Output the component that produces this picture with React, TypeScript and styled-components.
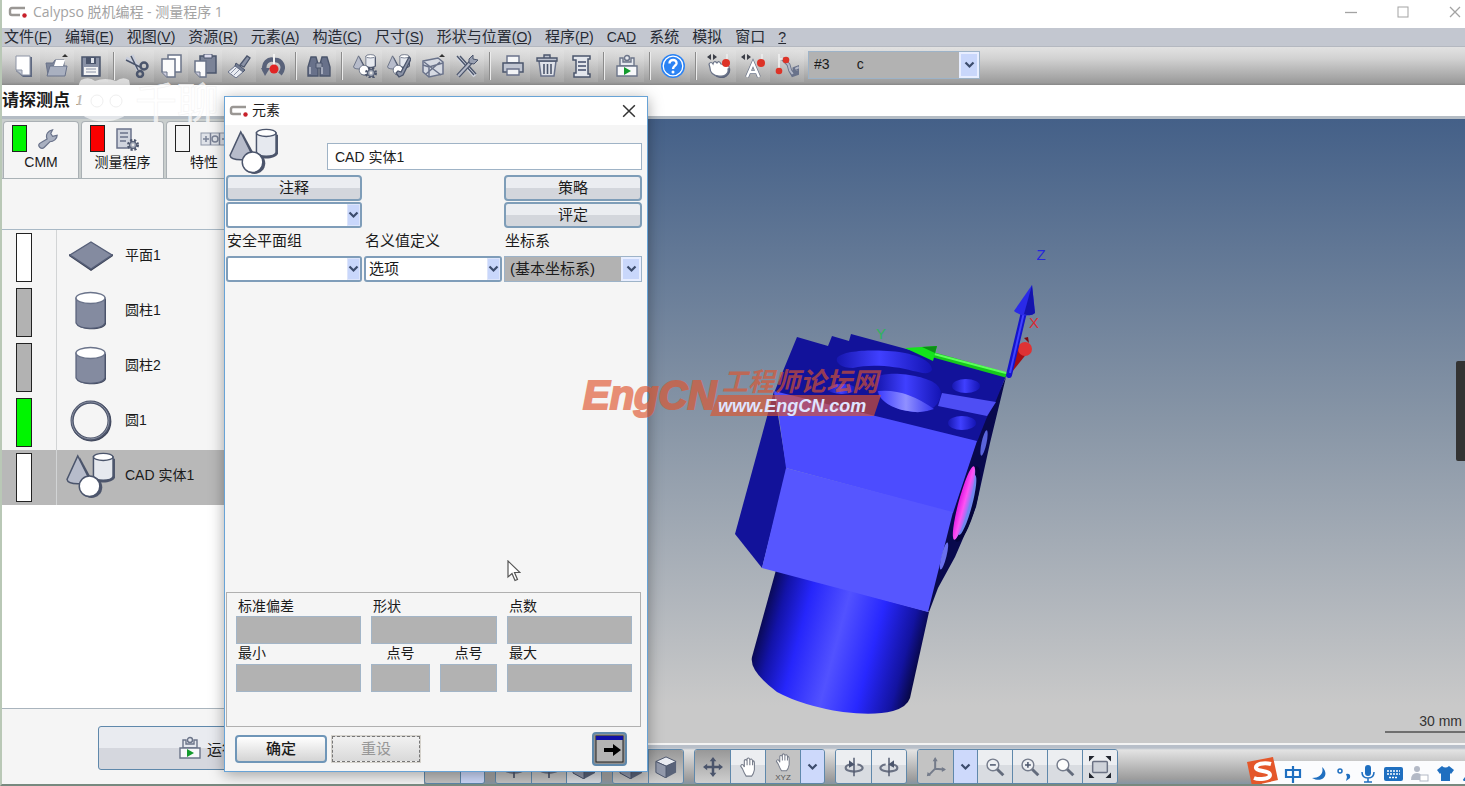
import React, { useId } from "react";
import styled, { createGlobalStyle, css } from "styled-components";

const GlobalStyle = createGlobalStyle`
  *, *::before, *::after { box-sizing: border-box; }
  html, body { margin: 0; height: 100%; overflow: hidden; }
  #root { height: 100%; }
  body, button, input, select {
    font-family: "Liberation Sans", "Noto Sans CJK SC", sans-serif;
    font-size: 15px;
    color: #1b1b1b;
  }
  button, input, select { margin: 0; padding: 0; border-radius: 0; }
  svg { display: block; flex: none; }
`;

/* ---------- palette ---------- */
const line = "#4b556c";
const steel = "#848ba0";
const pale = "#e6e9ef";
const frame = "#5f88ab";

/* ---------- window shell ---------- */
const Window = styled.div`
  position: relative;
  display: flex;
  flex-direction: column;
  height: 100vh;
  min-height: 640px;
  background: #fff;
  border-left: 2px solid #b9c8b6;
  border-bottom: 2px solid #77897f;
  overflow: hidden;
`;

const TitleBar = styled.header`
  display: flex;
  align-items: center;
  height: 28px;
  padding: 0 2px 4px 6px;
  gap: 5px;
  color: #a3a3a3;
  font-family: "Open Sans", "Noto Sans CJK SC", sans-serif;
  font-size: 14px;
  line-height: 20px;
`;

const TitleText = styled.h1`
  flex: 1;
  margin: 0;
  font-size: inherit;
  font-weight: 400;
`;

const WindowControls = styled.div`
  display: flex;
  gap: 36px;
`;

const PlainButton = styled.button`
  display: grid;
  place-items: center;
  width: 16px;
  height: 20px;
  border: 0;
  background: none;
  color: inherit;
`;

const MenuBar = styled.nav`
  display: flex;
  gap: 13px;
  height: 19px;
  padding-left: 2px;
  background: #c3c7d0;
  border-bottom: 1px solid #b4b8c0;
`;

const MenuItem = styled.button`
  border: 0;
  background: none;
  line-height: 16px;
  white-space: nowrap;
  color: #262a33;
`;

const Hotkey = styled.span`
  font-size: 14px;
`;

const ToolBar = styled.div`
  display: flex;
  align-items: center;
  height: 38px;
  padding-left: 4px;
  background: linear-gradient(#e2e2e2, #d2d2d2 30%, #9b9b9b 94%, #878787);
`;

const ToolButton = styled.button`
  display: grid;
  place-items: center;
  width: 34px;
  height: 32px;
  border: 0;
  background: linear-gradient(90deg, transparent, rgba(255, 255, 255, 0.1));
`;

const Separator = styled.span`
  width: 2px;
  height: 28px;
  margin: 0 5px;
  background: #8b8b8b;
  border-right: 1px solid #ececec;
`;

const MessageBar = styled.div`
  display: flex;
  align-items: center;
  gap: 6px;
  height: 31px;
  font-size: 17px;
  line-height: 24px;
`;

const MessageIndex = styled.em`
  font-family: "Liberation Serif", serif;
  font-size: 14px;
  font-weight: 700;
  color: #5a4a38;
`;

const Work = styled.main`
  flex: 1;
  display: flex;
  min-height: 0;
  border-top: 3px solid #b4bcc4;
`;

/* ---------- left panel ---------- */
const SidePanel = styled.aside`
  display: flex;
  flex-direction: column;
  flex: none;
  width: 422px;
  background: #f5f5f5;
`;

const Tabs = styled.div`
  display: flex;
  gap: 2px;
  height: 60px;
  padding: 2px 1px 0;
  background: #c9cecd;
  border-bottom: 1px solid #aab2b6;
`;

const Tab = styled.button<{ $width: number }>`
  display: flex;
  flex-direction: column;
  align-items: stretch;
  width: ${(p) => p.$width}px;
  padding: 3px 8px 0;
  border: 1px solid #aab0b4;
  border-bottom: 0;
  border-radius: 4px 4px 0 0;
  background: #f5f5f5;
  font-size: 14px;
  line-height: 20px;
  text-align: center;
  white-space: nowrap;
`;

const TabTop = styled.span`
  display: flex;
  align-items: center;
  gap: 10px;
  height: 27px;
`;

const Lamp = styled.span<{ $color: string; $tall?: boolean }>`
  flex: none;
  width: ${(p) => (p.$tall ? 16 : 15)}px;
  height: ${(p) => (p.$tall ? 49 : 27)}px;
  border: 1px solid #222;
  background: ${(p) => p.$color};
`;

const PanelHeader = styled.div`
  height: 51px;
  border-bottom: 1px solid #a9b9c6;
`;

const FeatureList = styled.ul`
  flex: 1;
  display: grid;
  grid-auto-rows: 55px;
  align-content: start;
  margin: 0;
  padding: 0;
  list-style: none;
  background: #fff;
`;

const FeatureRow = styled.button<{ $selected?: boolean }>`
  display: grid;
  grid-template-columns: 55px 68px 1fr;
  width: 100%;
  height: 100%;
  border: 0;
  background: ${(p) => (p.$selected ? "#b8b8b8" : "#f5f5f5")};
  font-size: 14px;
  line-height: 51px;
  text-align: left;
`;

const LampCell = styled.span`
  padding: 3px 0 0 14px;
  border-right: 1px solid #d2d4d5;

  > span {
    display: block;
  }
`;

const IconCell = styled.span`
  display: grid;
  place-items: center;
  height: 51px;
`;

const PanelFooter = styled.div`
  display: flex;
  justify-content: center;
  height: 76px;
  padding-top: 17px;
  border-top: 1px solid #a9b4bd;
`;

const RunButton = styled.button`
  display: flex;
  align-items: center;
  gap: 5px;
  width: 230px;
  height: 44px;
  padding-left: 79px;
  border: 1px solid ${frame};
  border-radius: 3px;
  background: linear-gradient(#e9ebf0 50%, #d5d7de 50%);
`;

/* ---------- 3D view ---------- */
const ViewColumn = styled.section`
  flex: 1;
  display: flex;
  flex-direction: column;
  min-width: 0;
`;

const Viewport = styled.div`
  position: relative;
  flex: 1;
  min-height: 0;
  background: linear-gradient(#446088, #8795a6 48%, #c9c9c9 94%);

  > svg {
    width: 100%;
    height: 100%;
  }
`;

const ScaleMark = styled.span`
  position: absolute;
  right: 0;
  bottom: 10px;
  width: 80px;
  padding-right: 3px;
  border-bottom: 2px solid #6f6f6f;
  font-size: 14px;
  line-height: 20px;
  text-align: right;
  color: #333;
`;

const ViewBar = styled.div`
  display: flex;
  gap: 10px;
  height: 41px;
  padding-top: 4px;
  border-top: 2px solid #f3f3f3;
  background: linear-gradient(#b8bfc9 3px, #e3e3e3 5px, #9c9c9c 34px, #8495a4);
`;

const ViewGroup = styled.div`
  display: flex;
  height: 35px;
  border: 1px solid ${frame};
  border-radius: 3px;
  overflow: hidden;
`;

type ViewKind = "light" | "grey" | "pressed" | "blue";
const viewFill: Record<ViewKind, string> = {
  light: "linear-gradient(#eceef1 45%, #d9dce1 45%)",
  grey: "#c3c3c3",
  pressed: "linear-gradient(#989898, #cfcfcf)",
  blue: "#cdd9fb",
};

const ViewButton = styled.button<{ $kind: ViewKind; $narrow?: boolean }>`
  display: grid;
  place-items: center;
  width: ${(p) => (p.$narrow ? 24 : 35)}px;
  border: 0;
  background: ${(p) => viewFill[p.$kind]};

  & + & {
    border-left: 1px solid ${(p) => (p.$narrow ? "#dfe5f2" : frame)};
  }
`;

/* ---------- dialog ---------- */
const Dialog = styled.section`
  position: absolute;
  left: 222px;
  top: 96px;
  bottom: 12px;
  display: flex;
  flex-direction: column;
  width: 424px;
  border: 1px solid #68a3d6;
  background: #f5f5f5;
  box-shadow: 0 3px 14px rgba(0, 0, 0, 0.35);
`;

const DialogTitle = styled.header`
  display: flex;
  align-items: center;
  gap: 3px;
  height: 28px;
  padding: 0 10px 0 4px;
  background: #fff;
  font-size: 14px;

  h2 {
    flex: 1;
    margin: 0;
    font-size: 14px;
    font-weight: 400;
    line-height: 20px;
    padding-bottom: 2px;
  }
`;

const DialogBody = styled.div`
  flex: 1;
  display: flex;
  flex-direction: column;
  min-height: 0;
  padding: 0 5px 0 1px;
`;

const NameRow = styled.div`
  display: flex;
  align-items: flex-end;
  justify-content: space-between;
  height: 50px;
  padding-left: 3px;
`;

const NameInput = styled.input`
  width: 315px;
  height: 27px;
  margin-bottom: 5px;
  padding: 0 7px 2px;
  border: 1px solid #9fb3c6;
  background: #fff;
  font-size: 14px;
`;

const FieldGrid = styled.div`
  display: grid;
  grid-template-columns: 136px 1fr 138px;
  grid-auto-rows: 26px;
  gap: 1px 2px;
`;

const FormButton = styled.button`
  border: 2px solid #7e9db8;
  border-radius: 4px;
  background: linear-gradient(#ebedf1 50%, #d3d6dc 50%);
  line-height: 20px;
`;

const FieldLabel = styled.label`
  padding: 1px 1px 0;
  line-height: 22px;
`;

const SelectBox = styled.span<{ $disabled?: boolean }>`
  position: relative;
  display: flex;
  border: 2px solid #7f9db9;
  border-radius: 3px;
  background: #fff;

  select {
    flex: 1;
    min-width: 0;
    padding: 0 3px 2px;
    border: 0;
    background: none;
    appearance: none;
    opacity: 1;
    color: inherit;
  }

  ${(p) =>
    p.$disabled &&
    css`
      border-width: 1px;
      border-color: #9db3c8;
      border-radius: 0;
      background: #b2b2b2;

      select {
        padding: 0 5px 2px;
      }
    `}
`;

const DropMark = styled.span<{ $wide?: boolean }>`
  display: grid;
  place-items: center;
  width: ${(p) => (p.$wide ? 20 : 13)}px;
  border: ${(p) => (p.$wide ? 2 : 1)}px solid ${(p) => (p.$wide ? "#e8eeff" : "#dde5fb")};
  background: #c9d7fb;
  pointer-events: none;
`;

const ToolbarSelect = styled.div`
  display: flex;
  width: 172px;
  height: 28px;
  margin: 0 0 2px 4px;

  > span {
    flex: 1;
  }

  select {
    font-size: 14px;
  }
`;

const Filler = styled.div`
  flex: 1;
`;

const StatsPanel = styled.div`
  display: grid;
  grid-template-columns: 125px 59px 57px 125px;
  grid-template-rows: 19px 28px 20px 28px;
  column-gap: 10px;
  height: 135px;
  margin-right: 1px;
  padding: 4px 9px 0;
  border: 1px solid #b0b0b0;
  font-size: 14px;
`;

const StatLabel = styled.label<{ $span?: number; $center?: boolean }>`
  grid-column: span ${(p) => p.$span ?? 1};
  padding: 0 2px;
  line-height: 19px;
  text-align: ${(p) => (p.$center ? "center" : "left")};
`;

const StatBox = styled.input<{ $span?: number }>`
  grid-column: span ${(p) => p.$span ?? 1};
  width: 100%;
  height: 28px;
  border: 1px solid #a3b5c7;
  background: #b2b2b2;
`;

const DialogFooter = styled.footer`
  display: flex;
  align-items: center;
  gap: 5px;
  height: 44px;
  padding: 0 20px 0 10px;
`;

const OkButton = styled.button`
  width: 92px;
  height: 28px;
  border: 2px solid #6f96b8;
  border-radius: 4px;
  background: linear-gradient(#fff, #d4d4d4);
  font-weight: 500;
  line-height: 20px;
`;

const ResetButton = styled.button`
  width: 88px;
  height: 26px;
  margin-right: auto;
  border: 1px dashed #777;
  outline: 1px solid #d5d2cc;
  background: linear-gradient(#f1f1f1, #d9d9d9);
  line-height: 20px;
  color: #979797;
`;

const ArrowButton = styled.button`
  display: grid;
  place-items: center;
  width: 35px;
  height: 34px;
  border: 2px solid #5f88ab;
  border-radius: 4px;
  background: #8f8f8f;
`;

/* ---------- overlays ---------- */
const Pointer = styled.svg`
  position: absolute;
  left: 282px;
  top: 463px;
`;

const StreamMark = styled.svg`
  position: absolute;
  left: 73px;
  top: 74px;
  overflow: visible;
  pointer-events: none;
`;

const ForumMark = styled.svg`
  position: absolute;
  left: 578px;
  top: 364px;
  overflow: visible;
  pointer-events: none;
`;

const SideHandle = styled.span`
  position: absolute;
  right: 0;
  top: 361px;
  width: 9px;
  height: 100px;
  background: #333;
  border-radius: 2px 0 0 2px;
`;

const InputMethodBar = styled.div`
  position: absolute;
  right: 0;
  bottom: -2px;
  display: flex;
  align-items: flex-end;

  > svg {
    position: relative;
    z-index: 1;
    margin-right: -18px;
  }
`;

const InputMethodItems = styled.div`
  display: flex;
  align-items: center;
  gap: 8px;
  width: 203px;
  height: 25px;
  padding-left: 22px;
  background: #fbfcfe;
  overflow: hidden;
`;

/* ---------- drawings ---------- */
const ShapesArt = () => (
  <g stroke={line} strokeWidth="1.5">
    <path d="M14 5 L27 29 C26 33 21 35 14 34 Z" fill="#4d556b" stroke="none" />
    <path d="M12 4 L1 28 C2 34 22 34 24 28 Z" fill="#b7bccb" />
    <path d="M30 6 V28 C32 33 48 32 50 26 V7 Z" fill="#4d556b" stroke="none" />
    <path d="M28 5 V25 C30 30 46 30 48 25 V5 Z" fill={pale} />
    <ellipse cx="38" cy="5" rx="10" ry="3.6" fill="#fff" />
    <circle cx="26" cy="36" r="11" fill="#4d556b" stroke="none" />
    <circle cx="24" cy="35" r="10.5" fill="#fff" />
  </g>
);

const ShapesIcon = () => (
  <svg width="50" height="47" viewBox="0 0 51 48"><ShapesArt /></svg>
);

const PlaneIcon = () => (
  <svg width="46" height="32" viewBox="0 0 46 32">
    <path d="M1 16 L23 31 L45 16 L45 14 L23 28 L1 14Z" fill="#3d4458" />
    <path d="M23 2 L44 15 L23 29 L2 15Z" fill={steel} stroke="#565f78" strokeWidth="1.4" />
  </svg>
);

const CylinderIcon = () => (
  <svg width="34" height="40" viewBox="0 0 34 40">
    <path d="M3 8 V33 C6 40 30 40 32 33 V8Z" fill="#3d4458" />
    <path d="M2 7 V32 C5 39 28 39 31 32 V7Z" fill={steel} stroke="#565f78" strokeWidth="1.2" />
    <ellipse cx="16.500" cy="7" rx="14.500" ry="5.500" fill="#fff" stroke="#6a738a" strokeWidth="1.4" />
  </svg>
);

const CircleIcon = () => (
  <svg width="44" height="42" viewBox="0 0 44 42">
    <circle cx="22.400" cy="21.400" r="18.500" fill="none" stroke="#3d4458" strokeWidth="3" />
    <circle cx="21.600" cy="20.600" r="18.500" fill="#f5f5f5" stroke="#4d556b" strokeWidth="3.200" />
    <circle cx="21.400" cy="20.400" r="18.500" fill="none" stroke="#8a91a3" strokeWidth="1" />
  </svg>
);

const Logo = () => (
  <svg width="20" height="12" viewBox="0 0 20 12">
    <path d="M17 2 H4 Q2 2 2 4 V7 Q2 9 4 9 H12" fill="none" stroke="#9a9794" strokeWidth="2.400" />
    <circle cx="16.500" cy="9.500" r="2.200" fill="#c8202a" />
  </svg>
);

const Chevron = () => (
  <svg width="11" height="8" viewBox="0 0 11 8">
    <path d="M1.500 1.500 L5.500 5.500 L9.500 1.500" fill="none" stroke="#3c4c6c" strokeWidth="2.200" />
  </svg>
);

const Cross = ({ color = "#a3a3a3", size = 12 }: { color?: string; size?: number }) => (
  <svg width={size} height={size} viewBox="0 0 12 12">
    <path d="M1 1 L11 11 M11 1 L1 11" stroke={color} strokeWidth="1.300" />
  </svg>
);

const WrenchArt = () => (
  <path
    d="M3 21 C1 19 2 17 4 16 L11 12 C9 7 12 3 17 2 L15 6 L17 9 L22 8 C22 12 18 15 14 15 L8 21 C6 23 4 22 3 21Z"
    fill="#a9b0c0" stroke="#69728a" strokeWidth="1.300"
  />
);

const GearArt = ({ x, y, r }: { x: number; y: number; r: number }) => (
  <g transform={`translate(${x} ${y})`}>
    <circle r={r} fill="none" stroke={line} strokeWidth="3" strokeDasharray="2 1.600" />
    <circle r={r - 1} fill="#9fa6b5" stroke={line} strokeWidth="1" />
    <circle r="1.400" fill="#e8e8e8" />
  </g>
);

const MachineArt = () => (
  <g stroke="#6b7489" strokeWidth="1.400">
    <path d="M5 12 V4 H8 V8 H16 V4 H19 V12Z" fill={pale} />
    <circle cx="12" cy="4" r="2.500" fill={pale} />
    <path d="M2 12 H22 V22 H2Z" fill="#f7f8fa" />
    <path d="M9 13 L16 17 L9 21Z" fill="#129a2c" stroke="none" />
  </g>
);

const art: Record<string, React.ReactNode> = {
  new: <><path d="M6 3 H21 V23 H12 L5 17Z" fill="#5e6880" /><path d="M5 2 H19 V21 H11 L5 16Z" fill="#fff" stroke="#8d94a5" /><path d="M5 16 H11 V21Z" fill="#c5cad5" stroke="#8d94a5" /></>,
  open: <><path d="M1 9 H8 L10 6 H19 V21 H3Z" fill="#7d8599" stroke="#69728a" /><path d="M2 22 L5 12 H22 L20 22Z" fill="#a9b0c0" stroke="#69728a" /><path d="M11 6 H20 L18 12 H9Z" fill="#fff" /><path d="M17 3 L20 0 L23 3Z" fill="#333" /></>,
  save: <><path d="M3 3 H21 V22 H3Z" fill="#8a92a6" stroke={line} strokeWidth="1.500" /><path d="M7 3 H17 V10 H7Z" fill={line} /><path d="M12 4 H15 V9 H12Z" fill="#dfe3ea" /><path d="M5 13 H19 V21 H5Z" fill="#f5f5f5" /><path d="M7 15 H17 M7 18 H17" stroke="#8a92a6" /></>,
  cut: <><path d="M1 4 L14 12 M7 1 L13 16" stroke="#c9cedb" strokeWidth="3.500" /><path d="M1 6 L15 13 M6 2 L13 16" stroke={line} strokeWidth="1.500" /><circle cx="19" cy="12" r="3.500" fill="none" stroke={line} strokeWidth="2.500" /><circle cx="15" cy="20" r="3" fill="none" stroke={line} strokeWidth="2.500" /></>,
  copy: <><path d="M9 1 H22 V18 H9Z" fill="#fff" stroke="#6b7489" strokeWidth="1.500" /><path d="M3 5 H16 V23 H8 L3 18Z" fill="#fbfbfb" stroke="#6b7489" strokeWidth="1.500" /><path d="M3 18 H8 V23" fill="#ccd" stroke="#6b7489" /></>,
  paste: <><path d="M7 2 H23 V19 H7Z" fill="#7b8397" stroke={line} strokeWidth="1.500" /><path d="M11 0 H19 V4 H11Z" fill="#dde" stroke={line} /><path d="M2 7 H13 V23 H7 L2 18Z" fill="#fbfbfb" stroke="#6b7489" strokeWidth="1.500" /><path d="M2 18 H7 V23" fill="#ccd" stroke="#6b7489" /></>,
  brush: <><path d="M13 11 L20 2 L23 4 L17 13Z" fill="#8a92a6" stroke={line} strokeWidth="1.300" /><path d="M9 9 L18 16 L16 18 L8 12Z" fill="#717b91" stroke={line} /><path d="M8 12 L16 18 L9 24 L1 18Z" fill="#e9ecf2" stroke="#69728a" /><path d="M4 19 L9 14 M7 21 L12 16" stroke="#8a92a6" /></>,
  undo: <><path d="M4 17 C1 9 8 4 13 6 C20 5 25 13 19 20" fill="none" stroke="#59627a" strokeWidth="4.500" /><path d="M0 14 H9 L4 22Z" fill="#59627a" /><path d="M13 0 V12" stroke="#f3f3f3" strokeWidth="2" /><circle cx="13" cy="15" r="4.500" fill="#e02424" /></>,
  find: <><path d="M4 3 H9 L11 10 V22 H1 V13Z M15 3 H20 L23 13 V22 H13 V10Z" fill="#68718a" stroke={line} strokeWidth="1.400" /><path d="M9 9 H15 V14 H9Z" fill="#9299aa" stroke={line} /><path d="M3 13 V20 M15 13 V20" stroke="#b9bfcd" strokeWidth="1.500" /></>,
  featGear: <><g transform="scale(.46)"><ShapesArt /></g><GearArt x={18} y={19} r={4.5} /></>,
  featPen: <><g transform="scale(.46)"><ShapesArt /></g><path d="M22 3 L24 5 L16 21 L12 23 L9 19 L11 17 L14 18Z" fill="#8a92a6" stroke={line} strokeWidth="1.300" /></>,
  featBox: <><path d="M2 7 L17 4 L22 8 V20 L8 23 L2 18Z" fill="#d6dae3" stroke="#69728a" strokeWidth="1.500" /><path d="M3 8 L20 21 M19 8 L5 20 M2 11 L8 13 L22 9 M8 13 V23" stroke="#69728a" strokeWidth="1.500" fill="none" /><path d="M18 3 L21 0 L24 3Z" fill="#333" /></>,
  tools: <><path d="M3 3 L20 22" stroke="#d3d7e0" strokeWidth="4" /><path d="M2 2 L19 21 M5 2 L21 20" stroke={line} strokeWidth="1.400" /><path d="M3 22 L16 8" stroke={line} strokeWidth="4.500" /><path d="M3 22 L16 8" stroke="#b5bac8" strokeWidth="2" /><path d="M14 5 L18 1 L18 5 L23 6 L19 10 L14 9Z" fill="#9aa1b2" stroke={line} /></>,
  print: <><path d="M6 2 H18 V9 H6Z" fill="#f5f6f8" stroke="#69728a" strokeWidth="1.400" /><path d="M2 9 H22 V18 H2Z" fill="#c0c5d1" stroke={line} strokeWidth="1.500" /><path d="M6 15 H18 V21 H6Z" fill="#f2f3f6" stroke="#69728a" strokeWidth="1.400" /></>,
  trash: <><path d="M4 7 H21 L19 22 H6Z" fill="#dfe2e9" stroke="#69728a" strokeWidth="1.500" /><path d="M2 4 H22 V7 H2Z M9 1 H15 V4 H9Z" fill="#bcc2cf" stroke={line} strokeWidth="1.400" /><path d="M9 10 V20 M12.500 10 V20 M16 10 V20" stroke={line} strokeWidth="1.600" /></>,
  script: <><path d="M6 2 H21 V5 H19 V20 H21 V23 H5 V19 H7 V6 H4 V2Z" fill="#e3e6ec" stroke={line} strokeWidth="1.500" /><path d="M9 8 H17 M9 12 H17 M9 16 H17" stroke="#69728a" strokeWidth="1.800" /></>,
  machine: <MachineArt />,
  help: <><circle cx="12" cy="12" r="12" fill="#2b83f4" /><circle cx="12" cy="12" r="9.800" fill="none" stroke="#fff" strokeWidth="1.300" /><path d="M8.500 9.500 C8.500 4.500 16 5 15.500 9.500 C15 12 12 12 12 15" fill="none" stroke="#fff" strokeWidth="2.400" /><circle cx="12" cy="18" r="1.500" fill="#fff" /></>,
  handProbe: <><path d="M0 3 L4 0 V6Z M10 3 L6 0 V6Z" fill="#3c3f48" /><path d="M5 15 C5 21 10 25 17 24 C22 22 24 18 23 14Z" fill="#5b647b" /><path d="M3 14 L2 10 Q4 7 6 10 Q7 6 10 9 Q12 6 14 10 L20 11 Q24 13 21 15 C22 20 17 23 12 22 C6 22 3 18 3 14Z" fill="#fff" stroke="#6b7489" strokeWidth="1.200" /><path d="M20 0 V8" stroke="#eee" strokeWidth="1.500" /><circle cx="19" cy="9" r="4" fill="#dd3327" /></>,
  autoProbe: <><path d="M0 3 L4 0 V6Z M10 3 L6 0 V6Z" fill="#3c3f48" /><path d="M6 23 L12 9 L18 23 M8 18 H16" fill="none" stroke="#6b7489" strokeWidth="3.800" /><path d="M6 23 L12 9 L18 23 M8 18 H16" fill="none" stroke="#fff" strokeWidth="2.400" /><path d="M21 0 V8" stroke="#eee" strokeWidth="1.500" /><circle cx="20" cy="9" r="4" fill="#dd3327" /></>,
  probeTool: <><g transform="translate(5 3) scale(.85)"><path d="M3 2 L10 9 L12 16 L15 21 L21 19 L17 17 V14 L22 12 L23 17" fill="none" stroke="#69728a" strokeWidth="4.500" /><path d="M3 2 L10 9 L12 16 L15 20 M18 14 L22 12" fill="none" stroke="#b5bac8" strokeWidth="2.400" /></g><path d="M4 5 H11 M4 0 V17" stroke="#f0f0f0" strokeWidth="1.600" /><circle cx="11" cy="6" r="3.300" fill="#dd3327" /><circle cx="4" cy="17" r="3.300" fill="#dd3327" /></>,
  wrench: <WrenchArt />,
  program: <><path d="M2 2 H16 V21 H2Z" fill="#d0d4de" stroke="#69728a" strokeWidth="1.500" /><path d="M5 6 H13 M5 10 H13 M5 14 H11" stroke="#69728a" strokeWidth="1.500" /><GearArt x={18} y={18} r={4.500} /></>,
  move: <><path d="M12 0 L16 5 H13.500 V10.500 H19 V8 L24 12 L19 16 V13.500 H13.500 V19 H16 L12 24 L8 19 H10.500 V13.500 H5 V16 L0 12 L5 8 V10.500 H10.500 V5 H8Z" fill="#4b556c" /></>,
  hand: <path d="M6 14 L4 11 Q5 8 7 10 L8 12 V5 Q9 3 11 5 V3 Q13 1 14 4 Q16 2 17 5 Q19 5 19 8 V15 Q18 20 16 22 H10 Q8 19 6 14Z M11 5 V10 M14 4 V10 M17 5 V10" fill="#fff" stroke="#777d8b" strokeWidth="1.200" />,
  cube: <><path d="M12 1 L23 6 V18 L12 24 L1 18 V6Z" fill="#596379" /><path d="M12 1 L23 6 L12 11 L1 6Z" fill="#e9ecf2" stroke={line} /><path d="M1 6 L12 11 V24 L1 18Z" fill="#9299ab" stroke={line} /></>,
  spin: <><path d="M8 9 C0 10 0 16 8 17 C15 18.500 24 16 22 12 Q20 9 16 9" fill="none" stroke="#6b7284" strokeWidth="2.600" /><path d="M12 1 V23" stroke="#555d70" strokeWidth="1.800" /><path d="M6 4 L13 9 L6 13Z" fill="#4b556c" /></>,
  axes: <><path d="M11 14 V2 M11 14 L22 15 M11 14 L3 22" stroke="#747b8a" strokeWidth="2.400" /><path d="M8 5 L11 0 L14 5Z M19 12 L24 15 L19 18Z M2 18 L1 23 L6 22Z" fill="#747b8a" /></>,
  zoomOut: <><path d="M14 14 L22 22" stroke="#636b7c" strokeWidth="3.500" /><circle cx="9.500" cy="9.500" r="7" fill="#eef0f3" stroke="#757c8c" strokeWidth="1.700" /><path d="M6 9.500 H13" stroke="#4b556c" strokeWidth="1.800" /></>,
  zoomIn: <><path d="M14 14 L22 22" stroke="#636b7c" strokeWidth="3.500" /><circle cx="9.500" cy="9.500" r="7" fill="#eef0f3" stroke="#757c8c" strokeWidth="1.700" /><path d="M6 9.500 H13 M9.500 6 V13" stroke="#4b556c" strokeWidth="1.800" /></>,
  zoom: <><path d="M14 14 L22 22" stroke="#636b7c" strokeWidth="3.500" /><circle cx="9.500" cy="9.500" r="7" fill="#fdfdfd" stroke="#757c8c" strokeWidth="1.700" /></>,
  fit: <><rect x="4" y="6" width="16" height="12" rx="1" fill="#cfd3da" stroke="#6b7284" strokeWidth="1.600" /><path d="M0 0 H6 L0 6Z M24 0 V6 L18 0Z M0 24 V18 L6 24Z M24 24 H18 L24 18Z" fill="#22262f" /></>,
};

const Icon = ({ name, size = 24, flip }: { name: string; size?: number; flip?: boolean }) => (
  <svg width={size} height={size} viewBox="0 0 24 24" fill="none" aria-hidden="true">
    <g transform={flip ? "translate(24 0) scale(-1 1)" : undefined}>{art[name]}</g>
  </svg>
);

const GridIcon = () => (
  <svg width="30" height="16" viewBox="0 0 30 16">
    <rect x="1" y="2" width="28" height="12" fill="#dfe2e8" stroke="#8f97a8" />
    <path d="M10.500 2 V14 M19.500 2 V14 M3 8 H9 M6 5 V11 M22 8 H27" stroke="#7b8397" strokeWidth="1.500" />
    <circle cx="15" cy="8" r="3" fill="none" stroke="#7b8397" strokeWidth="1.500" />
  </svg>
);

const PartScene = () => (
  <svg viewBox="424 119 1041 624" preserveAspectRatio="xMidYMid meet" role="img" aria-label="CAD">
    <defs>
      <linearGradient id="barrel" gradientUnits="userSpaceOnUse" x1="763" y1="612" x2="922" y2="655">
        <stop offset="0" stopColor="#09094f" />
        <stop offset=".1" stopColor="#1313a8" />
        <stop offset=".25" stopColor="#2626fb" />
        <stop offset=".48" stopColor="#5252ff" />
        <stop offset=".7" stopColor="#2828ff" />
        <stop offset=".9" stopColor="#1313a0" />
        <stop offset="1" stopColor="#070740" />
      </linearGradient>
      <linearGradient id="bore" x1="0" x2="1">
        <stop offset="0" stopColor="#1717b0" />
        <stop offset=".45" stopColor="#4040ff" />
        <stop offset="1" stopColor="#1414b4" />
      </linearGradient>
      <linearGradient id="floor" x1="0" x2="1">
        <stop offset="0" stopColor="#3c3cff" />
        <stop offset=".5" stopColor="#9090ff" />
        <stop offset="1" stopColor="#3434f0" />
      </linearGradient>
      <linearGradient id="pinkBore" x1="0" x2="1">
        <stop offset="0" stopColor="#e01ae0" />
        <stop offset=".55" stopColor="#ff52f4" />
        <stop offset="1" stopColor="#8a7cf4" />
      </linearGradient>
    </defs>
    <path d="M776 570 L752 657 Q749 671 777 692 Q803 706 843 712 Q874 716 893 711 Q907 707 910 698 L929 612Z" fill="url(#barrel)" />
    <path d="M1006 377 L990 443 L976 507 L968 527 L955 557 L938 588 L929 612 L920 600 L950 500 L970 441 L987 416Z" fill="#09094d" />
    <path d="M797 337 L828 346 L832 336 L849 341 L851 334 L1006 376 L995 403 L987 417 L977 442 L774 393Z" fill="#12129a" />
    <path d="M774 391 L735 534 L762 568 L787 470Z" fill="#12129a" />
    <path d="M774 391 L977 441 L953 513 L786 468 L778 410Z" fill="#4c4cff" />
    <path d="M786 468 L953 512 L928 612 L762 568Z" fill="#5656ff" />
    <path d="M942 393 L996 402 L987 416 L938 406Z" fill="#4e4ef4" />
    <path d="M837 358 C845 348 890 350 905 353 C925 357 932 364 932 370 C928 376 920 372 913 371 C895 366 870 364 853 368 C842 368 835 363 837 358Z" fill="url(#bore)" />
    <path d="M877 377 C888 370 925 375 936 384 Q943 390 940 398 Q936 412 915 412 C900 411 880 403 877 392Z" fill="url(#bore)" />
    <path d="M878 391 Q905 388 934 409 Q921 414 908 411 C892 409 879 400 878 391Z" fill="url(#floor)" />
    <ellipse cx="966" cy="386" rx="14" ry="7" fill="url(#bore)" />
    <ellipse cx="962" cy="423" rx="14" ry="7" fill="url(#bore)" />
    <ellipse cx="842" cy="389" rx="14" ry="5" fill="url(#bore)" />
    <ellipse cx="967" cy="504" rx="9" ry="39" transform="rotate(15 967 504)" fill="#05053a" />
    <ellipse cx="967" cy="505" rx="5" ry="31" transform="rotate(15 967 505)" fill="#7088ee" />
    <ellipse cx="964" cy="503" rx="5.500" ry="38" transform="rotate(15 964 503)" fill="url(#pinkBore)" />
    <ellipse cx="984" cy="443" rx="2.500" ry="13" transform="rotate(12 984 443)" fill="#5a64dc" />
    <ellipse cx="944" cy="556" rx="2.500" ry="14" transform="rotate(14 944 556)" fill="#6a70ee" />
    <path d="M1008 377 L1017 345 L1028 352Z" fill="#a50d14" />
    <circle cx="1025" cy="349" r="7" fill="#de3234" />
    <path d="M1024 338 L1028 337 L1029 343Z" fill="#7c0b10" />
    <path d="M1024 312 L1009 375" stroke="#1414cc" strokeWidth="6" strokeLinecap="round" />
    <path d="M1024 312 L1010 373" stroke="#4242ff" strokeWidth="2" />
    <path d="M1032 285 L1014 311 Q1024 319 1035 313Z" fill="#2a2ae8" />
    <path d="M1032 285 L1024 314 Q1031 317 1035 313Z" fill="#1414ac" />
    <path d="M934 355 L1006 375" stroke="#16c81c" strokeWidth="5" />
    <path d="M934 354 L1006 373" stroke="#5cff5c" strokeWidth="2" />
    <path d="M905 348 L937 346 L933 361Z" fill="#14e41c" />
    <path d="M922 347 L937 346 L935 353Z" fill="#0c8f18" />
    <g fontFamily="Liberation Sans, sans-serif" fontSize="15" textAnchor="middle">
      <text x="1041" y="260" fill="#2626dc">Z</text>
      <text x="1034" y="328" fill="#d82c34">X</text>
      <text x="881" y="339" fill="#2fb45c">Y</text>
    </g>
  </svg>
);

/* ---------- small composites ---------- */
const menus: [string, string][] = [
  ["文件", "F"], ["编辑", "E"], ["视图", "V"], ["资源", "R"], ["元素", "A"],
  ["构造", "C"], ["尺寸", "S"], ["形状与位置", "O"], ["程序", "P"],
];

const toolGroups = [
  ["new", "open", "save"],
  ["cut", "copy", "paste", "brush", "undo"],
  ["find"],
  ["featGear", "featPen", "featBox", "tools"],
  ["print", "trash", "script"],
  ["machine"],
  ["help"],
  ["handProbe", "autoProbe", "probeTool"],
];

const features = [
  { label: "平面1", lamp: "#fff", icon: <PlaneIcon /> },
  { label: "圆柱1", lamp: "#b2b2b2", icon: <CylinderIcon /> },
  { label: "圆柱2", lamp: "#b2b2b2", icon: <CylinderIcon /> },
  { label: "圆1", lamp: "#00f500", icon: <CircleIcon /> },
  { label: "CAD 实体1", lamp: "#fff", icon: <ShapesIcon />, selected: true },
];

interface ChoiceProps { id?: string; name?: string; value?: string; disabled?: boolean }

const Choice = ({ id, name, value = "", disabled }: ChoiceProps) => (
  <SelectBox $disabled={disabled}>
    <select id={id} aria-label={name} defaultValue={value}>
      <option value={value}>{value}</option>
    </select>
    <DropMark $wide={disabled}><Chevron /></DropMark>
  </SelectBox>
);

const ElementDialog = () => {
  const id = useId();
  return (
    <Dialog role="dialog" aria-labelledby={`${id}-title`}>
      <DialogTitle>
        <Logo />
        <h2 id={`${id}-title`}>元素</h2>
        <PlainButton aria-label="关闭"><Cross color="#333" size={14} /></PlainButton>
      </DialogTitle>
      <DialogBody>
        <NameRow>
          <ShapesIcon />
          <NameInput aria-label="名称" defaultValue="CAD 实体1" />
        </NameRow>
        <FieldGrid>
          <FormButton>注释</FormButton>
          <span />
          <FormButton>策略</FormButton>
          <Choice name="注释" />
          <span />
          <FormButton>评定</FormButton>
          <FieldLabel htmlFor={`${id}-plane`}>安全平面组</FieldLabel>
          <FieldLabel htmlFor={`${id}-nominal`}>名义值定义</FieldLabel>
          <FieldLabel htmlFor={`${id}-system`}>坐标系</FieldLabel>
          <Choice id={`${id}-plane`} />
          <Choice id={`${id}-nominal`} value="选项" />
          <Choice id={`${id}-system`} value="(基本坐标系)" disabled />
        </FieldGrid>
        <Filler />
        <StatsPanel>
          <StatLabel htmlFor={`${id}-dev`}>标准偏差</StatLabel>
          <StatLabel htmlFor={`${id}-form`} $span={2}>形状</StatLabel>
          <StatLabel htmlFor={`${id}-count`}>点数</StatLabel>
          <StatBox id={`${id}-dev`} readOnly />
          <StatBox id={`${id}-form`} $span={2} readOnly />
          <StatBox id={`${id}-count`} readOnly />
          <StatLabel htmlFor={`${id}-min`}>最小</StatLabel>
          <StatLabel htmlFor={`${id}-minNo`} $center>点号</StatLabel>
          <StatLabel htmlFor={`${id}-maxNo`} $center>点号</StatLabel>
          <StatLabel htmlFor={`${id}-max`}>最大</StatLabel>
          <StatBox id={`${id}-min`} readOnly />
          <StatBox id={`${id}-minNo`} readOnly />
          <StatBox id={`${id}-maxNo`} readOnly />
          <StatBox id={`${id}-max`} readOnly />
        </StatsPanel>
      </DialogBody>
      <DialogFooter>
        <OkButton>确定</OkButton>
        <ResetButton disabled>重设</ResetButton>
        <ArrowButton aria-label="下一步">
          <svg width="29" height="28" viewBox="0 0 29 28">
            <rect x="1" y="1" width="27" height="26" fill="#b4b4b4" stroke="#222" />
            <rect x="1" y="1" width="27" height="4" fill="#1010a8" />
            <path d="M9 13 H18 V9 L26 15 L18 21 V17 H9Z" fill="#000" />
          </svg>
        </ArrowButton>
      </DialogFooter>
      <Pointer width="14" height="22" viewBox="0 0 14 22">
        <path d="M1 1 V17 L5 13.500 L8 20.500 L10.500 19.500 L7.500 12.500 H13Z" fill="#fff" stroke="#555" strokeWidth="1.200" />
      </Pointer>
    </Dialog>
  );
};

const StreamWatermark = () => (
  <StreamMark width="148" height="54" viewBox="0 0 148 54" aria-hidden="true">
    <path d="M6 6 Q14 2 20 7 Q30 3 41 7 Q48 2 54 6 Q56 14 54 18 Q60 34 48 43 Q28 52 10 43 Q-2 32 4 18 Q2 12 6 6Z" fill="#fff" fillOpacity=".62" />
    <circle cx="22" cy="27" r="6" fill="none" stroke="#efefef" />
    <circle cx="41" cy="27" r="6" fill="none" stroke="#efefef" />
    <text x="60" y="44" fontFamily="Noto Sans CJK SC, sans-serif" fontSize="42" fill="#fff" fillOpacity=".7" stroke="#f3f3f3" strokeWidth=".5">千聊</text>
  </StreamMark>
);

const ForumWatermark = () => (
  <ForumMark width="310" height="60" viewBox="580 364 310 60">
    <g fill="#e0542c" opacity=".64" fontFamily="Liberation Sans, sans-serif" fontWeight="700" fontStyle="italic">
      <text x="583" y="409" fontSize="40" stroke="#e0542c" strokeWidth="2">EngCN</text>
      <text x="722" y="391" fontFamily="Noto Sans CJK SC, sans-serif" fontSize="26">工程师论坛网</text>
      <path d="M718 395 H881 L874 416 H710Z" />
    </g>
    <text x="718" y="412" fill="#dfe4ff" fontFamily="Liberation Sans, sans-serif" fontSize="18" fontWeight="700" fontStyle="italic">www.EngCN.com</text>
  </ForumMark>
);

const InputMethod = () => (
  <InputMethodBar>
    <svg width="34" height="30" viewBox="0 0 34 30">
      <path d="M1 6 L27 1 L32 24 L6 30Z" fill="#e4572a" />
      <path d="M25 8 C18 6 9 8 10 12 C11 16 24 14 24 19 C24 23 13 24 8 22" fill="none" stroke="#fff" strokeWidth="4" />
    </svg>
    <InputMethodItems>
      <svg width="18" height="18" viewBox="0 0 18 18" fill="none" stroke="#1f6fc0" strokeWidth="2.200"><path d="M2 5 H16 V12 H2Z M9 1 V18" /></svg>
      <svg width="18" height="16" viewBox="0 0 18 16"><path d="M12 1 C20 8 13 18 2 12 C10 12 14 7 12 1Z" fill="#1f6fc0" /></svg>
      <svg width="16" height="16" viewBox="0 0 16 16"><circle cx="4" cy="5" r="2" fill="none" stroke="#1f6fc0" strokeWidth="1.500" /><path d="M10 8 Q15 7 14 12 L10 15 L11 11Z" fill="#1f6fc0" /></svg>
      <svg width="16" height="18" viewBox="0 0 16 18"><rect x="5" y="0" width="6" height="11" rx="3" fill="#1f6fc0" /><path d="M2 7 Q2 13 8 13 Q14 13 14 7 M8 13 V17 M4 17 H12" fill="none" stroke="#1f6fc0" strokeWidth="1.500" /></svg>
      <svg width="19" height="14" viewBox="0 0 19 14"><rect x="0" y="0" width="19" height="14" rx="2" fill="#1f6fc0" /><path d="M3 4 H16 M3 7 H16 M5 10.500 H14" stroke="#fff" strokeWidth="1.300" strokeDasharray="2 1" /></svg>
      <svg width="18" height="16" viewBox="0 0 18 16"><circle cx="6" cy="3" r="3" fill="#b3b9c6" /><path d="M0 14 Q0 7 6 7 Q9 7 10 9 V14Z" fill="#b3b9c6" /><rect x="9" y="9" width="8" height="6" fill="#fff" stroke="#b3b9c6" /></svg>
      <svg width="17" height="15" viewBox="0 0 17 15"><path d="M5 0 Q8.500 3 12 0 L17 4 L14 8 L13 7 V15 H4 V7 L3 8 L0 4Z" fill="#1f6fc0" /></svg>
      <svg width="14" height="14" viewBox="0 0 14 14"><path d="M2 14 L10 3" stroke="#1f6fc0" strokeWidth="3" /></svg>
    </InputMethodItems>
  </InputMethodBar>
);

export default function App() {
  return (
    <>
      <GlobalStyle />
      <Window>
        <TitleBar>
          <Logo />
          <TitleText>Calypso 脱机编程 - 测量程序 1</TitleText>
          <WindowControls>
            <PlainButton aria-label="最小化"><svg width="12" height="12"><path d="M0 6.500 H12" stroke="#a3a3a3" strokeWidth="1.300" /></svg></PlainButton>
            <PlainButton aria-label="最大化"><svg width="12" height="12"><rect x="1" y="1" width="10" height="10" fill="none" stroke="#a3a3a3" /></svg></PlainButton>
            <PlainButton aria-label="关闭"><Cross /></PlainButton>
          </WindowControls>
        </TitleBar>

        <MenuBar>
          {menus.map(([label, key]) => (
            <MenuItem key={label}>{label}<Hotkey>(<u>{key}</u>)</Hotkey></MenuItem>
          ))}
          <MenuItem><Hotkey>CA<u>D</u></Hotkey></MenuItem>
          <MenuItem>系统</MenuItem>
          <MenuItem>模拟</MenuItem>
          <MenuItem>窗口</MenuItem>
          <MenuItem><Hotkey><u>?</u></Hotkey></MenuItem>
        </MenuBar>

        <ToolBar role="toolbar">
          {toolGroups.map((group, i) => (
            <React.Fragment key={group[0]}>
              {i > 0 && <Separator />}
              {group.map((name) => (
                <ToolButton key={name} aria-label={name}><Icon name={name} /></ToolButton>
              ))}
            </React.Fragment>
          ))}
          <ToolbarSelect><Choice name="探针" value={"#3\u00a0\u00a0\u00a0\u00a0\u00a0\u00a0\u00a0c"} disabled /></ToolbarSelect>
        </ToolBar>

        <MessageBar>
          <strong>请探测点</strong>
          <MessageIndex>1</MessageIndex>
        </MessageBar>

        <Work>
          <SidePanel>
            <Tabs role="tablist">
              <Tab role="tab" $width={76}><TabTop><Lamp $color="#00f500" /><Icon name="wrench" size={22} /></TabTop>CMM</Tab>
              <Tab role="tab" $width={83} aria-selected="true"><TabTop><Lamp $color="#fa0000" /><Icon name="program" /></TabTop>测量程序</Tab>
              <Tab role="tab" $width={76}><TabTop><Lamp $color="#f5f5f5" /><GridIcon /></TabTop>特性</Tab>
            </Tabs>
            <PanelHeader />
            <FeatureList>
              {features.map((f) => (
                <li key={f.label}>
                  <FeatureRow $selected={f.selected}>
                    <LampCell><Lamp $color={f.lamp} $tall /></LampCell>
                    <IconCell>{f.icon}</IconCell>
                    {f.label}
                  </FeatureRow>
                </li>
              ))}
            </FeatureList>
            <PanelFooter>
              <RunButton><Icon name="machine" />运行</RunButton>
            </PanelFooter>
          </SidePanel>

          <ViewColumn>
            <Viewport>
              <PartScene />
              <ScaleMark>30 mm</ScaleMark>
            </Viewport>
            <ViewBar role="toolbar">
              <ViewGroup>
                <ViewButton $kind="grey" aria-label="视图" />
                <ViewButton $kind="blue" $narrow aria-label="视图列表" />
              </ViewGroup>
              <ViewGroup>
                <ViewButton $kind="grey" aria-label="左转"><Icon name="spin" /></ViewButton>
                <ViewButton $kind="grey" aria-label="右转"><Icon name="spin" flip /></ViewButton>
                <ViewButton $kind="light" aria-label="平面"><Icon name="cube" /></ViewButton>
              </ViewGroup>
              <ViewGroup>
                <ViewButton $kind="grey" aria-label="线框"><Icon name="cube" /></ViewButton>
                <ViewButton $kind="pressed" aria-label="实体"><Icon name="cube" size={22} /></ViewButton>
              </ViewGroup>
              <ViewGroup>
                <ViewButton $kind="pressed" aria-label="移动"><Icon name="move" size={20} /></ViewButton>
                <ViewButton $kind="light" aria-label="平移"><Icon name="hand" size={22} /></ViewButton>
                <ViewButton $kind="grey" aria-label="XYZ">
                  <svg width="26" height="30" viewBox="0 0 26 30">
                    <g transform="translate(3 0) scale(.85)">{art.hand}</g>
                    <text x="13" y="28" fontSize="8" textAnchor="middle" fontFamily="Liberation Sans, sans-serif" fill="#555">XYZ</text>
                  </svg>
                </ViewButton>
                <ViewButton $kind="blue" $narrow aria-label="平移列表"><Chevron /></ViewButton>
              </ViewGroup>
              <ViewGroup>
                <ViewButton $kind="light" aria-label="绕轴左转"><Icon name="spin" size={20} /></ViewButton>
                <ViewButton $kind="light" aria-label="绕轴右转"><Icon name="spin" size={20} flip /></ViewButton>
              </ViewGroup>
              <ViewGroup>
                <ViewButton $kind="grey" aria-label="坐标轴"><Icon name="axes" size={20} /></ViewButton>
                <ViewButton $kind="blue" $narrow aria-label="坐标轴列表"><Chevron /></ViewButton>
                <ViewButton $kind="light" aria-label="缩小"><Icon name="zoomOut" size={20} /></ViewButton>
                <ViewButton $kind="light" aria-label="放大"><Icon name="zoomIn" size={20} /></ViewButton>
                <ViewButton $kind="light" aria-label="缩放"><Icon name="zoom" size={20} /></ViewButton>
                <ViewButton $kind="light" aria-label="适合窗口"><Icon name="fit" size={22} /></ViewButton>
              </ViewGroup>
            </ViewBar>
          </ViewColumn>
        </Work>

        <StreamWatermark />
        <ElementDialog />
        <ForumWatermark />
        <SideHandle />
        <InputMethod />
      </Window>
    </>
  );
}
